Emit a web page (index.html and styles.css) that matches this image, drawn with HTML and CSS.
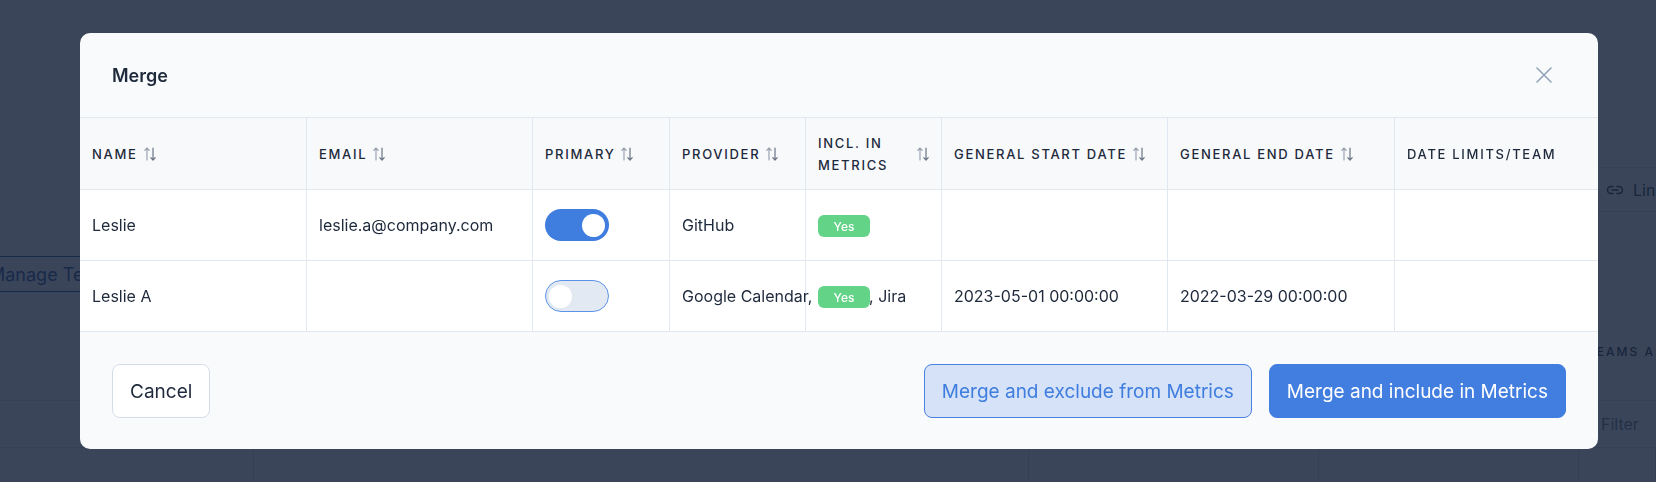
FILE: index.html
```html
<!DOCTYPE html>
<html lang="en">
<head>
<meta charset="utf-8">
<title>Merge</title>
<link rel="stylesheet" href="styles.css">
</head>
<body>
<div class="page">
  <div class="page-top"></div>
  <div class="page-row row-link">
    <span class="page-link">
      <svg class="link-icon" viewBox="0 0 16 10" width="16" height="10"><path d="M6 1.5H4a3.5 3.5 0 0 0 0 7h2M10 1.5h2a3.5 3.5 0 0 1 0 7h-2M5 5h6" fill="none" stroke="#1e293b" stroke-width="1.6" stroke-linecap="round"/></svg>
      Link
    </span>
  </div>
  <div class="page-row row-manage">
    <span class="page-manage">Manage Teams</span>
  </div>
  <div class="page-row row-teams">
    <span class="page-teams">Teams assigned</span>
  </div>
  <div class="page-row row-filter">
    <span class="page-filter">Filter</span>
  </div>
  <div class="page-cols">
    <span></span><span></span><span></span><span></span><span></span>
  </div>
</div>

<div class="overlay">
  <div class="modal">
    <div class="modal-header">
      <h2 class="modal-title">Merge</h2>
      <button class="close-btn" aria-label="Close">
        <svg viewBox="0 0 16 16" width="16" height="16"><path d="M1 1L15 15M15 1L1 15" stroke="#94a3b8" stroke-width="1.6" stroke-linecap="round"/></svg>
      </button>
    </div>

    <div class="table">
      <div class="th"><span class="th-label">Name</span><svg class="sort" viewBox="0 0 12 14" width="12" height="14"><path d="M3 13V1M0.8 3.4L3 1l2.2 2.4" fill="none" stroke="#9aa3b1" stroke-width="1.2" stroke-linecap="round" stroke-linejoin="round"/><path d="M9 1v12M6.8 10.6L9 13l2.2-2.4" fill="none" stroke="#6b7485" stroke-width="1.2" stroke-linecap="round" stroke-linejoin="round"/></svg></div>
      <div class="th"><span class="th-label">Email</span><svg class="sort" viewBox="0 0 12 14" width="12" height="14"><path d="M3 13V1M0.8 3.4L3 1l2.2 2.4" fill="none" stroke="#9aa3b1" stroke-width="1.2" stroke-linecap="round" stroke-linejoin="round"/><path d="M9 1v12M6.8 10.6L9 13l2.2-2.4" fill="none" stroke="#6b7485" stroke-width="1.2" stroke-linecap="round" stroke-linejoin="round"/></svg></div>
      <div class="th"><span class="th-label">Primary</span><svg class="sort" viewBox="0 0 12 14" width="12" height="14"><path d="M3 13V1M0.8 3.4L3 1l2.2 2.4" fill="none" stroke="#9aa3b1" stroke-width="1.2" stroke-linecap="round" stroke-linejoin="round"/><path d="M9 1v12M6.8 10.6L9 13l2.2-2.4" fill="none" stroke="#6b7485" stroke-width="1.2" stroke-linecap="round" stroke-linejoin="round"/></svg></div>
      <div class="th"><span class="th-label">Provider</span><svg class="sort" viewBox="0 0 12 14" width="12" height="14"><path d="M3 13V1M0.8 3.4L3 1l2.2 2.4" fill="none" stroke="#9aa3b1" stroke-width="1.2" stroke-linecap="round" stroke-linejoin="round"/><path d="M9 1v12M6.8 10.6L9 13l2.2-2.4" fill="none" stroke="#6b7485" stroke-width="1.2" stroke-linecap="round" stroke-linejoin="round"/></svg></div>
      <div class="th"><span class="th-label">Incl. in Metrics</span><svg class="sort" viewBox="0 0 12 14" width="12" height="14"><path d="M3 13V1M0.8 3.4L3 1l2.2 2.4" fill="none" stroke="#9aa3b1" stroke-width="1.2" stroke-linecap="round" stroke-linejoin="round"/><path d="M9 1v12M6.8 10.6L9 13l2.2-2.4" fill="none" stroke="#6b7485" stroke-width="1.2" stroke-linecap="round" stroke-linejoin="round"/></svg></div>
      <div class="th"><span class="th-label">General start date</span><svg class="sort" viewBox="0 0 12 14" width="12" height="14"><path d="M3 13V1M0.8 3.4L3 1l2.2 2.4" fill="none" stroke="#9aa3b1" stroke-width="1.2" stroke-linecap="round" stroke-linejoin="round"/><path d="M9 1v12M6.8 10.6L9 13l2.2-2.4" fill="none" stroke="#6b7485" stroke-width="1.2" stroke-linecap="round" stroke-linejoin="round"/></svg></div>
      <div class="th"><span class="th-label">General end date</span><svg class="sort" viewBox="0 0 12 14" width="12" height="14"><path d="M3 13V1M0.8 3.4L3 1l2.2 2.4" fill="none" stroke="#9aa3b1" stroke-width="1.2" stroke-linecap="round" stroke-linejoin="round"/><path d="M9 1v12M6.8 10.6L9 13l2.2-2.4" fill="none" stroke="#6b7485" stroke-width="1.2" stroke-linecap="round" stroke-linejoin="round"/></svg></div>
      <div class="th last"><span class="th-label">Date limits/team</span></div>

      <div class="td">Leslie</div>
      <div class="td">leslie.a@company.com</div>
      <div class="td"><span class="toggle on"><span class="knob"></span></span></div>
      <div class="td">GitHub</div>
      <div class="td"><span class="badge">Yes</span></div>
      <div class="td"></div>
      <div class="td"></div>
      <div class="td last"></div>

      <div class="td">Leslie A</div>
      <div class="td"></div>
      <div class="td"><span class="toggle off"><span class="knob"></span></span></div>
      <div class="td">Google Calendar, GitHub, Jira</div>
      <div class="td"><span class="badge">Yes</span></div>
      <div class="td">2023-05-01 00:00:00</div>
      <div class="td">2022-03-29 00:00:00</div>
      <div class="td last"></div>
    </div>

    <div class="modal-footer">
      <button class="btn btn-cancel">Cancel</button>
      <div class="actions">
        <button class="btn btn-exclude">Merge and exclude from Metrics</button>
        <button class="btn btn-include">Merge and include in Metrics</button>
      </div>
    </div>
  </div>
</div>
</body>
</html>
```

FILE: styles.css
```css
* { box-sizing: border-box; }

html, body {
  margin: 0;
  padding: 0;
  width: 1656px;
  height: 482px;
  overflow: hidden;
  font-family: Inter, "Noto Sans", "Liberation Sans", sans-serif;
  color: #1e293b;
  background: #ffffff;
}

/* ---------- page behind the overlay ---------- */
.page {
  width: 1656px;
  height: 482px;
  display: flex;
  flex-direction: column;
  background: #ffffff;
}
.page-top {
  height: 167px;
}
.page-row {
  display: flex;
  align-items: center;
}
.row-link {
  height: 45px;
  padding-left: 1598px;
}
.page-link {
  flex: 1;
  height: 45px;
  display: flex;
  align-items: center;
  gap: 10px;
  padding-left: 9px;
  font-size: 16px;
  white-space: nowrap;
  border-top: 1px solid #d8dee8;
  border-bottom: 1px solid #d8dee8;
}
.row-manage {
  height: 112px;
  align-items: flex-end;
  padding-bottom: 32px;
}
.page-manage {
  margin-left: -28px;
  height: 36px;
  padding: 0 16px;
  display: flex;
  align-items: center;
  border: 1px solid #2348a8;
  color: #27489a;
  font-size: 18px;
  white-space: nowrap;
}
.row-teams {
  height: 76px;
  align-items: flex-start;
  padding: 20px 0 0 1587px;
}
.page-teams {
  font-size: 12px;
  line-height: 16px;
  letter-spacing: 2px;
  text-transform: uppercase;
  font-weight: 500;
  white-space: nowrap;
}
.row-filter {
  height: 48px;
  padding-left: 1601px;
  border-top: 1px solid #d8dee8;
  border-bottom: 1px solid #d8dee8;
}
.page-filter {
  font-size: 16px;
  color: #64748b;
}
.page-cols {
  flex: 1;
  display: grid;
  grid-template-columns: 254px 775px 290px 260px 1fr;
}
.page-cols span {
  border-right: 1px solid #d8dee8;
}

/* ---------- overlay + modal ---------- */
.overlay {
  position: fixed;
  inset: 0;
  background: rgba(23, 36, 60, 0.85);
  display: flex;
  align-items: flex-start;
  padding: 33px 0 0 80px;
}
.modal {
  width: 1518px;
  background: #f8fafc;
  border-radius: 10px;
  overflow: hidden;
  display: flex;
  flex-direction: column;
}
.modal-header {
  height: 85px;
  display: flex;
  align-items: center;
  justify-content: space-between;
  padding: 0 32px;
  border-bottom: 1px solid #e2e8f0;
}
.modal-title {
  margin: 0;
  font-size: 18px;
  font-weight: 600;
  color: #1e293b;
}
.close-btn {
  width: 44px;
  height: 44px;
  border: 0;
  background: transparent;
  padding: 0;
  display: flex;
  align-items: center;
  justify-content: center;
}

/* ---------- table ---------- */
.table {
  display: grid;
  grid-template-columns: 227px 226px 137px 136px 136px 226px 227px 203px;
  grid-template-rows: 72px 71px 71px;
  background: #ffffff;
}
.th, .td {
  border-right: 1px solid #e2e8f0;
  border-bottom: 1px solid #e2e8f0;
  padding: 0 12px;
  display: flex;
  align-items: center;
  min-width: 0;
}
.th.last, .td.last { border-right: 0; }
.th {
  background: #f7f9fb;
  gap: 6px;
}
.th-label {
  font-size: 13px;
  line-height: 22px;
  font-weight: 500;
  letter-spacing: 1.7px;
  text-transform: uppercase;
  color: #1e293b;
}
.sort { flex: none; }
.td {
  font-size: 16px;
  color: #1e293b;
  white-space: nowrap;
}

.toggle {
  width: 64px;
  height: 32px;
  border-radius: 16px;
  display: flex;
  align-items: center;
  padding: 0 4px;
}
.toggle.on {
  background: #3f7ddf;
  justify-content: flex-end;
}
.toggle.off {
  background: #e3e9f3;
  border: 1.5px solid #5b93e8;
  justify-content: flex-start;
  padding: 0 3px;
}
.knob {
  width: 23px;
  height: 23px;
  border-radius: 50%;
  background: #ffffff;
}

.badge {
  display: inline-flex;
  align-items: center;
  justify-content: center;
  width: 52px;
  height: 22px;
  border-radius: 6px;
  background: #63d388;
  color: #ffffff;
  font-size: 12px;
  font-weight: 500;
  margin-top: 2px;
}

/* ---------- footer ---------- */
.modal-footer {
  display: flex;
  justify-content: space-between;
  align-items: center;
  padding: 32px 32px 31px;
}
.actions {
  display: flex;
  gap: 17px;
}
.btn {
  height: 54px;
  padding: 0 17px;
  border-radius: 8px;
  font-family: Inter, "Noto Sans", "Liberation Sans", sans-serif;
  font-size: 19px;
  cursor: pointer;
}
.btn-cancel {
  background: #ffffff;
  border: 1px solid #d5dcea;
  color: #1e293b;
}
.btn-exclude {
  background: #d5e2f7;
  border: 1px solid #4a80e0;
  color: #3f7ddf;
}
.btn-include {
  background: #427ee0;
  border: 1px solid #427ee0;
  color: #ffffff;
}
```
